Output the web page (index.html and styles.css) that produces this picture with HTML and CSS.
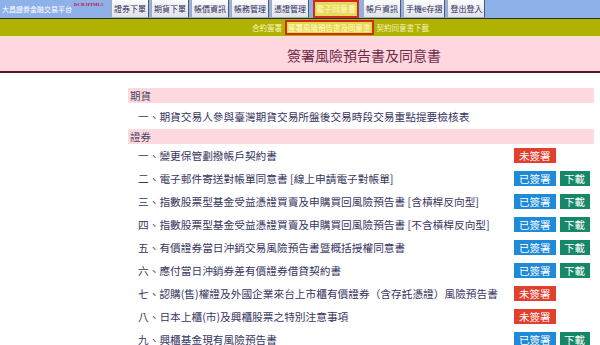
FILE: index.html
```html
<!DOCTYPE html>
<html lang="zh-Hant">
<head>
<meta charset="utf-8">
<title>簽署風險預告書及同意書</title>
<link rel="stylesheet" href="styles.css">
</head>
<body>
<header class="topbar">
  <div class="brand"><span class="brand-name">大昌證券金融交易平台</span><span class="brand-tag">DCB HTML5</span></div>
  <nav class="mainnav">
    <a class="tab">證券下單</a>
    <a class="tab">期貨下單</a>
    <a class="tab">帳價資訊</a>
    <a class="tab">帳務管理</a>
    <a class="tab">憑證管理</a>
    <a class="tab tab-active">電子同意書</a>
    <a class="tab">帳戶資訊</a>
    <a class="tab">手機e存摺</a>
    <a class="tab">登出登入</a>
  </nav>
</header>
<div class="subbar">
  <a class="sublink">合約簽署</a>
  <a class="sublink sublink-active">簽署風險預告書及同意書</a>
  <a class="sublink">契約同意書下載</a>
</div>
<div class="titlebar"><h1 class="page-title">簽署風險預告書及同意書</h1></div>
<main class="doclist">
  <div class="section">期貨</div>
  <div class="row row-first"><span class="doc">一、期貨交易人參與臺灣期貨交易所盤後交易時段交易重點提要檢核表</span></div>
  <div class="section">證券</div>
  <div class="row"><span class="doc">一、變更保管劃撥帳戶契約書</span><span class="actions"><a class="btn btn-unsigned">未簽署</a></span></div>
  <div class="row"><span class="doc">二、電子郵件寄送對帳單同意書 [線上申請電子對帳單]</span><span class="actions"><a class="btn btn-signed">已簽署</a><a class="btn btn-download">下載</a></span></div>
  <div class="row"><span class="doc">三、指數股票型基金受益憑證買賣及申購買回風險預告書 [含槓桿反向型]</span><span class="actions"><a class="btn btn-signed">已簽署</a><a class="btn btn-download">下載</a></span></div>
  <div class="row"><span class="doc">四、指數股票型基金受益憑證買賣及申購買回風險預告書 [不含槓桿反向型]</span><span class="actions"><a class="btn btn-signed">已簽署</a><a class="btn btn-download">下載</a></span></div>
  <div class="row"><span class="doc">五、有價證券當日沖銷交易風險預告書暨概括授權同意書</span><span class="actions"><a class="btn btn-signed">已簽署</a><a class="btn btn-download">下載</a></span></div>
  <div class="row"><span class="doc">六、應付當日沖銷券差有價證券借貸契約書</span><span class="actions"><a class="btn btn-signed">已簽署</a><a class="btn btn-download">下載</a></span></div>
  <div class="row"><span class="doc">七、認購(售)權證及外國企業來台上市櫃有價證券（含存託憑證）風險預告書</span><span class="actions"><a class="btn btn-unsigned">未簽署</a></span></div>
  <div class="row"><span class="doc">八、日本上櫃(市)及興櫃股票之特別注意事項</span><span class="actions"><a class="btn btn-unsigned">未簽署</a></span></div>
  <div class="row"><span class="doc">九、興櫃基金現有風險預告書</span><span class="actions"><a class="btn btn-signed">已簽署</a><a class="btn btn-download">下載</a></span></div>
</main>
</body>
</html>
```
FILE: styles.css
```css
* { box-sizing: border-box; }
html, body { margin: 0; padding: 0; background: #ffffff; }
body {
  font-family: "Noto Sans CJK TC", "Noto Sans", sans-serif;
  color: #363660;
  width: 600px;
  overflow: hidden;
}
a { text-decoration: none; cursor: pointer; }

.topbar {
  display: flex;
  height: 19px;
  background: #8fb1ea;
  border-bottom: 1px solid #2e2e2e;
}
.brand {
  flex: 0 0 111px;
  padding-left: 2px;
  display: flex;
  align-items: flex-start;
  white-space: nowrap;
}
.brand-name {
  color: #ffffff;
  font-size: 7px;
  line-height: 18px;
}
.brand-tag {
  color: #c8103c;
  font-size: 5px;
  font-weight: bold;
  line-height: 10px;
  margin-left: 2px;
  font-family: "Liberation Serif", serif;
}
.mainnav {
  display: flex;
  gap: 2px;
  height: 18px;
}
.tab {
  height: 18px;
  padding: 0 2px;
  border: 1px solid #a4acb8;
  border-right-color: #555a64;
  border-top: none;
  background: linear-gradient(#fbfbfb, #dfe3ea);
  color: #2c2c5c;
  font-size: 8px;
  line-height: 17px;
  white-space: nowrap;
}
.tab-active {
  margin: 0 2px 0 2px;
  padding: 0 1px;
  border: 2px solid #d22a1e;
  background: #e8da5a;
  color: #fffbd0;
  line-height: 14px;
}

.subbar {
  display: flex;
  align-items: center;
  height: 18px;
  padding-left: 252px;
  background: #b0b200;
  border-bottom: 1px solid #efe9b8;
  gap: 3px;
}
.sublink {
  color: #f8f2c0;
  font-size: 7.5px;
  line-height: 14px;
  white-space: nowrap;
}
.sublink-active {
  border: 2px solid #cf2a1a;
  background: #e7d84c;
  color: #fffbd6;
  padding: 0 1px;
  height: 15px;
  line-height: 11px;
}

.titlebar {
  height: 36px;
  background: #ffd7df;
  border-bottom: 2px solid #5c1628;
  padding-left: 128px;
}
.page-title {
  margin: 0;
  text-align: center;
  font-size: 14px;
  font-weight: normal;
  line-height: 36px;
  color: #6e2c48;
}

.doclist {
  padding: 15px 6px 0 128px;
  display: flex;
  flex-direction: column;
}
.section {
  height: 15px;
  background: #ffd9e0;
  padding-left: 2px;
  font-size: 10.5px;
  line-height: 15px;
  color: #4a4a5e;
}
.row {
  display: flex;
  align-items: center;
  height: 23px;
  padding-left: 10px;
  font-size: 10.7px;
  white-space: nowrap;
}
.row-first { height: 26px; }
.doc { flex: 1 1 auto; }
.actions {
  flex: 0 0 80px;
  display: flex;
  gap: 4px;
}
.btn {
  display: inline-block;
  height: 15px;
  padding: 0 5px;
  color: #ffffff;
  font-size: 10.5px;
  line-height: 15px;
}
.btn-unsigned { background: #e2402f; }
.btn-signed { background: #1f8ad8; }
.btn-download { background: #17876a; padding: 0 4.5px; }
```
